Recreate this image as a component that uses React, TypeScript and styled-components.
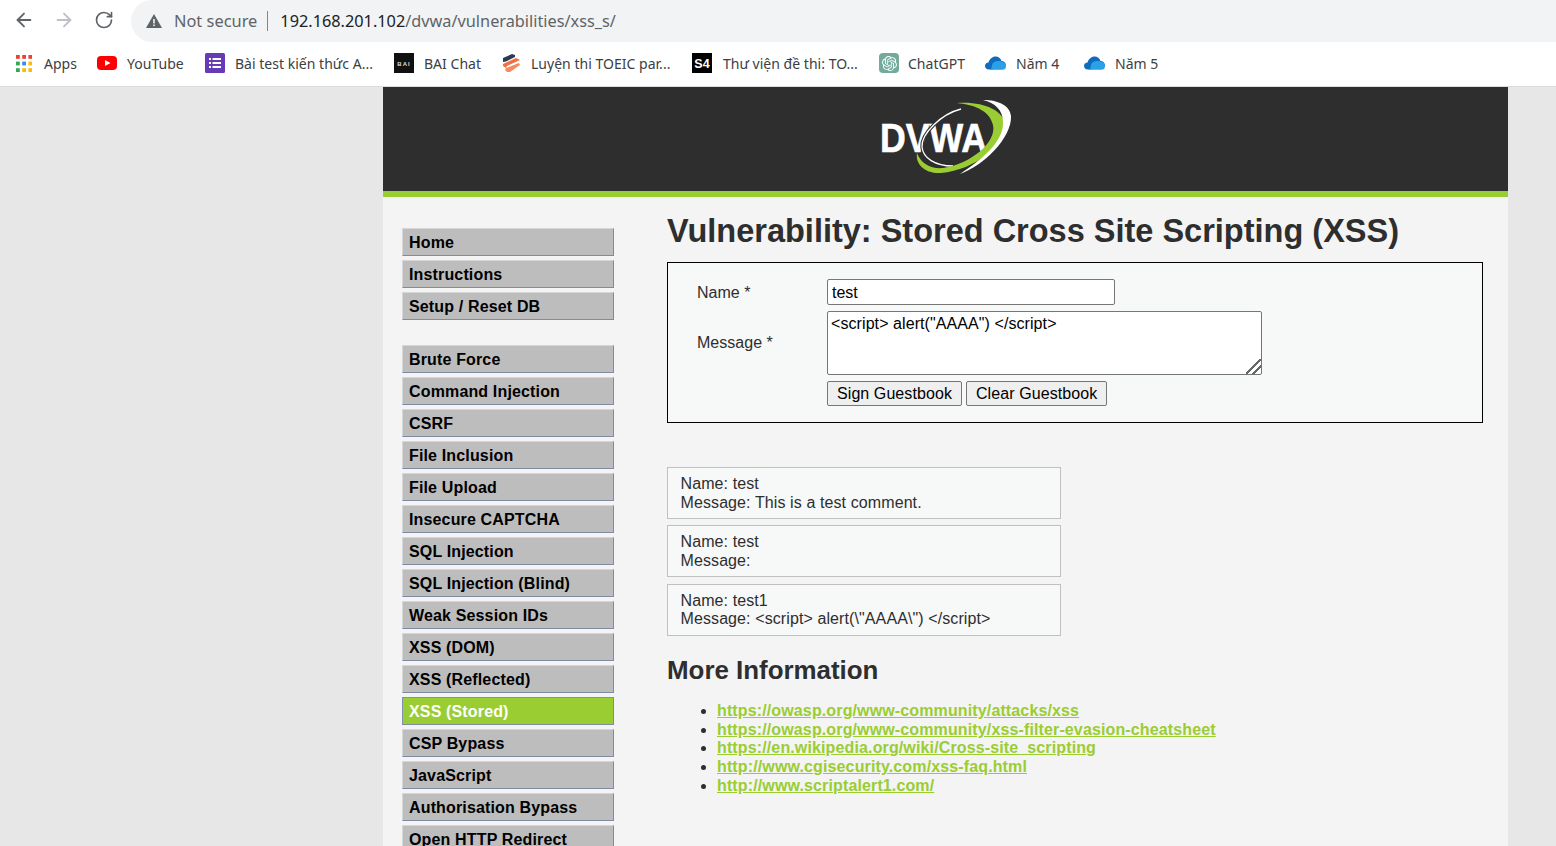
import React from "react";
import styled, { createGlobalStyle } from "styled-components";
import { ArrowLeft, ArrowRight, RotateCw } from "lucide-react";
import { SiOpenai } from "react-icons/si";

const Global = createGlobalStyle`
  html, body { margin: 0; padding: 0; height: 100%; overflow: hidden; background: #e7e7e7; }
  * { box-sizing: border-box; }
`;

const Shell = styled.div`
  width: 1556px;
  height: 846px;
  overflow: hidden;
  display: flex;
  flex-direction: column;
  font-family: "Liberation Sans", Arial, sans-serif;
`;

const Toolbar = styled.div`
  height: 42px;
  background: #fff;
  display: flex;
  align-items: center;
  flex: none;
`;

const NavIcon = styled.div<{ $w: number; $c: string; $pad: number }>`
  width: ${(p) => p.$w}px;
  padding-left: ${(p) => p.$pad}px;
  padding-bottom: 2px;
  height: 42px;
  display: flex;
  align-items: center;
  color: ${(p) => p.$c};
`;

const Omnibox = styled.div`
  flex: 1;
  height: 42px;
  background: #f1f3f4;
  border-radius: 21px 0 0 21px;
  display: flex;
  align-items: center;
  padding-left: 15px;
  padding-bottom: 1px;
  font-family: "Noto Sans", sans-serif;
  font-size: 16.3px;
`;

const Insecure = styled.span`
  color: #5f6368;
  margin-left: 12px;
  font-size: 16.4px;
`;

const Divider = styled.span`
  width: 1px;
  height: 20px;
  background: #80868b;
  margin: 0 12px 0 10px;
`;

const Host = styled.span`
  color: #202124;
`;

const Path = styled.span`
  color: #5f6368;
`;

const Bookmarks = styled.div`
  height: 45px;
  flex: none;
  background: #fff;
  border-bottom: 1px solid #dadce0;
  display: flex;
  align-items: center;
  padding-left: 16px;
  padding-bottom: 2px;
`;

const Bookmark = styled.div<{ $w: number; $gap: number }>`
  width: ${(p) => p.$w}px;
  display: flex;
  align-items: center;
  gap: ${(p) => p.$gap}px;
  font-family: "Noto Sans", sans-serif;
  font-size: 14px;
  letter-spacing: 0.02px;
  color: #3c4043;
  white-space: nowrap;
`;

const Page = styled.div`
  flex: 1;
  min-height: 0;
  background: #e7e7e7;
  padding-left: 383px;
`;

const Container = styled.div`
  width: 1125px;
  height: 100%;
  background: #f4f4f4;
  display: flex;
  flex-direction: column;
`;

const Banner = styled.header`
  height: 110px;
  flex: none;
  background: #2e2e2e;
  border-bottom: 6px solid #9acd32;
  display: flex;
  justify-content: center;
  padding: 11px 2px 0 0;
`;

const Body = styled.div`
  display: flex;
  flex: 1;
  min-height: 0;
  overflow: hidden;
`;

const Side = styled.nav`
  width: 212px;
  margin-left: 19px;
  padding-top: 31px;
  flex: none;
`;

const MenuGroup = styled.div`
  margin-bottom: 25px;
`;

const MenuItem = styled.div<{ $active?: boolean }>`
  height: 28px;
  margin-bottom: 4px;
  padding: 2px 0 0 6px;
  display: flex;
  align-items: center;
  background: ${(p) => (p.$active ? "#9acd32" : "#bdbdbd")};
  color: ${(p) => (p.$active ? "#fff" : "#000")};
  font-size: 16px;
  font-weight: 700;
  letter-spacing: 0.15px;
  border-top: 1px solid ${(p) => (p.$active ? "#7f93b0" : "#d6d6d6")};
  border-left: 1px solid ${(p) => (p.$active ? "#7f93b0" : "#d6d6d6")};
  border-right: 1px solid #7d8aa0;
  border-bottom: 1px solid #7d8aa0;
`;

const Main = styled.main`
  margin-left: 53px;
  width: 816px;
  flex: none;
  color: #2e2e2e;
`;

const Title = styled.h1`
  margin: 15px 0 11px;
  font-size: 32.5px;
  line-height: 39px;
  font-weight: 700;
  white-space: nowrap;
  color: #2e2e2e;
`;

const FormBox = styled.div`
  height: 161px;
  border: 1px solid #000;
  background: #f7f8f8;
  padding: 16px 0 0 29px;
  display: grid;
  grid-template-columns: 130px 1fr;
  grid-template-rows: 26px 64px 26px;
  row-gap: 6px;
  font-size: 16px;
  letter-spacing: 0.02px;
`;

const FieldLabel = styled.label<{ $drop?: number }>`
  display: flex;
  align-items: center;
  padding-top: ${(p) => p.$drop ?? 0}px;
  color: #2e2e2e;
`;

const TextInput = styled.input`
  width: 288px;
  height: 26px;
  border: 1px solid #767676;
  border-radius: 2px;
  padding: 3px 4px 1px;
  font: 16px "Liberation Sans", Arial, sans-serif;
  color: #000;
  background: #fff;
`;

const MessageArea = styled.textarea`
  width: 435px;
  height: 64px;
  border: 1px solid #767676;
  border-radius: 2px;
  padding: 3px 3px;
  font: 16px "Liberation Sans", Arial, sans-serif;
  letter-spacing: 0.08px;
  line-height: 18px;
  color: #000;
  background: #fff;
  display: block;

  &::-webkit-resizer {
    background: linear-gradient(
      135deg,
      transparent 44%,
      #666 44% 54%,
      transparent 54% 68%,
      #666 68% 78%,
      transparent 78%
    );
  }
`;

const Buttons = styled.div`
  grid-column: 2;
  display: flex;
  gap: 4px;
`;

const Btn = styled.button`
  height: 25px;
  padding: 1px 9px 0;
  border: 1px solid #767676;
  border-radius: 2px;
  background: #efefef;
  font: 16px "Liberation Sans", Arial, sans-serif;
  letter-spacing: 0.08px;
  color: #000;
`;

const Comments = styled.div`
  margin-top: 44px;
  display: flex;
  flex-direction: column;
  gap: 6.4px;
`;

const Comment = styled.div`
  width: 394px;
  height: 52px;
  border: 1px solid #c0c0c0;
  background: #f7f8f8;
  padding: 7px 12.5px;
  font-size: 16px;
  letter-spacing: 0.1px;
  line-height: 18.7px;
  color: #2e2e2e;
`;

const SubTitle = styled.h2`
  margin: 19px 0 0;
  font-size: 25.9px;
  line-height: 30px;
  font-weight: 700;
  color: #2e2e2e;
`;

const Links = styled.ul`
  margin: 17.3px 0 0;
  padding-left: 50px;
  font-size: 16px;
  letter-spacing: 0.13px;
  line-height: 18.7px;
  color: #2e2e2e;
`;

const Anchor = styled.a`
  color: #9acd32;
  font-weight: 700;
  text-decoration: underline;
`;

const Logo = () => (
  <svg width="140" height="80" viewBox="0 0 140 80">
    <text x="5" y="54" fontFamily="Liberation Sans, Arial, sans-serif" fontWeight="700" fontSize="41" fill="#fff" stroke="#fff" strokeWidth="0.6" textLength="107" lengthAdjust="spacingAndGlyphs">DVWA</text>
    <path d="M86 11 C66 16 46 36 47 49 C48 60 60 68 78 68" fill="none" stroke="#2e2e2e" strokeWidth="3.4" />
    <path d="M86 11 C66 16 46 36 47 49 C48 60 60 68 78 68" fill="none" stroke="#fff" strokeWidth="1.3" />
    <path d="M82 5 C108 3 128 12 130 26 C132 46 100 72 66 75 C50 76 40 66 42 55 C46 66 56 71 68 70 C96 66 122 44 118 27 C115 14 102 7 82 5Z" fill="#9acd32" />
    <path d="M108 2 C124 2 135 8 136 18 C137 40 108 68 85 76 C106 62 129 44 128 24 C128 12 120 5 108 2Z" fill="#fff" />
  </svg>
);

const AppsIcon = () => {
  const c = ["#ea4335", "#ea4335", "#ea4335", "#34a853", "#4285f4", "#fbbc05", "#34a853", "#fbbc05", "#fbbc05"];
  return (
    <svg width="16" height="18" viewBox="0 0 16 18">
      {c.map((f, i) => (
        <rect key={i} x={(i % 3) * 6.2} y={Math.floor(i / 3) * 6.6 + 1} width="3.8" height="3.8" fill={f} />
      ))}
    </svg>
  );
};

const YouTubeIcon = () => (
  <svg width="20" height="14" viewBox="0 0 20 14">
    <rect width="20" height="14" rx="4" fill="#f00" />
    <path d="M8 4 L13.5 7 L8 10Z" fill="#fff" />
  </svg>
);

const FormsIcon = () => (
  <svg width="20" height="20" viewBox="0 0 20 20">
    <rect width="20" height="20" rx="1.5" fill="#673ab7" />
    <g fill="#fff">
      <rect x="4" y="5" width="2" height="2" />
      <rect x="7.5" y="5" width="8.5" height="2" />
      <rect x="4" y="9" width="2" height="2" />
      <rect x="7.5" y="9" width="8.5" height="2" />
      <rect x="4" y="13" width="2" height="2" />
      <rect x="7.5" y="13" width="8.5" height="2" />
    </g>
  </svg>
);

const BaiIcon = () => (
  <svg width="20" height="20" viewBox="0 0 20 20">
    <rect width="20" height="20" fill="#111" />
    <text x="10" y="12.5" textAnchor="middle" fontFamily="Liberation Sans, sans-serif" fontWeight="700" fontSize="6" letterSpacing="1" fill="#ddd">BAI</text>
  </svg>
);

const ToeicIcon = () => (
  <svg width="20" height="20" viewBox="0 0 20 20">
    <path d="M2 9 L2 5 L11 1 L14 2 L14 4 L5 8.5Z" fill="#2e3a52" />
    <path d="M2 13 L2 11 L15 5 L19 7 L6 13 L5 15Z" fill="#f0703f" />
    <path d="M4 17 L5 15 L18 10 L19 12 L9 19 L6 19Z" fill="#f48a60" />
  </svg>
);

const S4Icon = () => (
  <svg width="20" height="20" viewBox="0 0 20 20">
    <rect width="20" height="20" fill="#000" />
    <text x="10" y="14.5" textAnchor="middle" fontFamily="Liberation Sans, sans-serif" fontWeight="700" fontSize="12.5" fill="#fff">S4</text>
  </svg>
);

const GptBadge = styled.span`
  width: 20px;
  height: 20px;
  border-radius: 4px;
  background: #74aa9c;
  color: #fff;
  display: flex;
  align-items: center;
  justify-content: center;
  flex: none;
`;

const OneDrive = () => (
  <svg width="21" height="14" viewBox="0 0 21 14">
    <path d="M7.5 13.5 H4 C1.5 13.5 0 11.8 0 10 C0 8 1.5 6.5 3.5 6.5 C4.5 3 7.5 0.5 10.5 0.5 C13.5 0.5 15.5 2 16.5 5 C19 5 21 7 21 9.5Z" fill="#0f6cbd" />
    <path d="M8 7 C10 5 14 4.5 16.5 5.5 C19.5 6 21 8 21 10.5 C21 12.5 19.5 13.8 17.5 13.8 H4 C8 13 6 9 8 7Z" fill="#2aa0e6" />
  </svg>
);

const Warning = () => (
  <svg width="16" height="14" viewBox="0 0 16 14">
    <path d="M8 0 L16 14 H0Z" fill="#5f6368" />
    <rect x="7.2" y="5" width="1.6" height="4.5" fill="#f1f3f4" />
    <rect x="7.2" y="10.5" width="1.6" height="1.6" fill="#f1f3f4" />
  </svg>
);

const bookmarks: { w: number; gap: number; icon: React.ReactNode; label: string }[] = [
  { w: 81, gap: 12, icon: <AppsIcon />, label: "Apps" },
  { w: 108, gap: 10, icon: <YouTubeIcon />, label: "YouTube" },
  { w: 189, gap: 10, icon: <FormsIcon />, label: "Bài test kiến thức A..." },
  { w: 107, gap: 10, icon: <BaiIcon />, label: "BAI Chat" },
  { w: 191, gap: 10, icon: <ToeicIcon />, label: "Luyện thi TOEIC par..." },
  { w: 187, gap: 11, icon: <S4Icon />, label: "Thư viện đề thi: TO..." },
  { w: 106, gap: 9, icon: <GptBadge><SiOpenai size={15} /></GptBadge>, label: "ChatGPT" },
  { w: 99, gap: 10, icon: <OneDrive />, label: "Năm 4" },
  { w: 99, gap: 10, icon: <OneDrive />, label: "Năm 5" },
];

const groupA = ["Home", "Instructions", "Setup / Reset DB"];
const groupB = [
  "Brute Force",
  "Command Injection",
  "CSRF",
  "File Inclusion",
  "File Upload",
  "Insecure CAPTCHA",
  "SQL Injection",
  "SQL Injection (Blind)",
  "Weak Session IDs",
  "XSS (DOM)",
  "XSS (Reflected)",
  "XSS (Stored)",
  "CSP Bypass",
  "JavaScript",
  "Authorisation Bypass",
  "Open HTTP Redirect",
];

const urls = [
  "https://owasp.org/www-community/attacks/xss",
  "https://owasp.org/www-community/xss-filter-evasion-cheatsheet",
  "https://en.wikipedia.org/wiki/Cross-site_scripting",
  "http://www.cgisecurity.com/xss-faq.html",
  "http://www.scriptalert1.com/",
];

export default function App() {
  return (
    <Shell>
      <Global />
      <Toolbar>
        <NavIcon $w={41} $pad={13} $c="#5f6368"><ArrowLeft size={22} strokeWidth={2} /></NavIcon>
        <NavIcon $w={40} $pad={12} $c="#bdc1c6"><ArrowRight size={22} strokeWidth={2} /></NavIcon>
        <NavIcon $w={50} $pad={13} $c="#5f6368"><RotateCw size={20} strokeWidth={2} /></NavIcon>
        <Omnibox>
          <Warning />
          <Insecure>Not secure</Insecure>
          <Divider />
          <Host>192.168.201.102</Host>
          <Path>/dvwa/vulnerabilities/xss_s/</Path>
        </Omnibox>
      </Toolbar>
      <Bookmarks>
        {bookmarks.map((b) => (
          <Bookmark key={b.label} $w={b.w} $gap={b.gap}>
            {b.icon}
            <span>{b.label}</span>
          </Bookmark>
        ))}
      </Bookmarks>
      <Page>
        <Container>
          <Banner><Logo /></Banner>
          <Body>
            <Side>
              <MenuGroup>
                {groupA.map((m) => <MenuItem key={m}>{m}</MenuItem>)}
              </MenuGroup>
              <div>
                {groupB.map((m) => <MenuItem key={m} $active={m === "XSS (Stored)"}>{m}</MenuItem>)}
              </div>
            </Side>
            <Main>
              <Title>Vulnerability: Stored Cross Site Scripting (XSS)</Title>
              <FormBox>
                <FieldLabel $drop={2}>Name *</FieldLabel>
                <TextInput defaultValue="test" />
                <FieldLabel>Message *</FieldLabel>
                <MessageArea defaultValue={'<script> alert("AAAA") </script>'} />
                <Buttons>
                  <Btn>Sign Guestbook</Btn>
                  <Btn>Clear Guestbook</Btn>
                </Buttons>
              </FormBox>
              <Comments>
                <Comment>Name: test<br />Message: This is a test comment.</Comment>
                <Comment>Name: test<br />Message:</Comment>
                <Comment>Name: test1<br />{'Message: <script> alert(\\"AAAA\\") </script>'}</Comment>
              </Comments>
              <SubTitle>More Information</SubTitle>
              <Links>
                {urls.map((u) => (
                  <li key={u}><Anchor href="#">{u}</Anchor></li>
                ))}
              </Links>
            </Main>
          </Body>
        </Container>
      </Page>
    </Shell>
  );
}
